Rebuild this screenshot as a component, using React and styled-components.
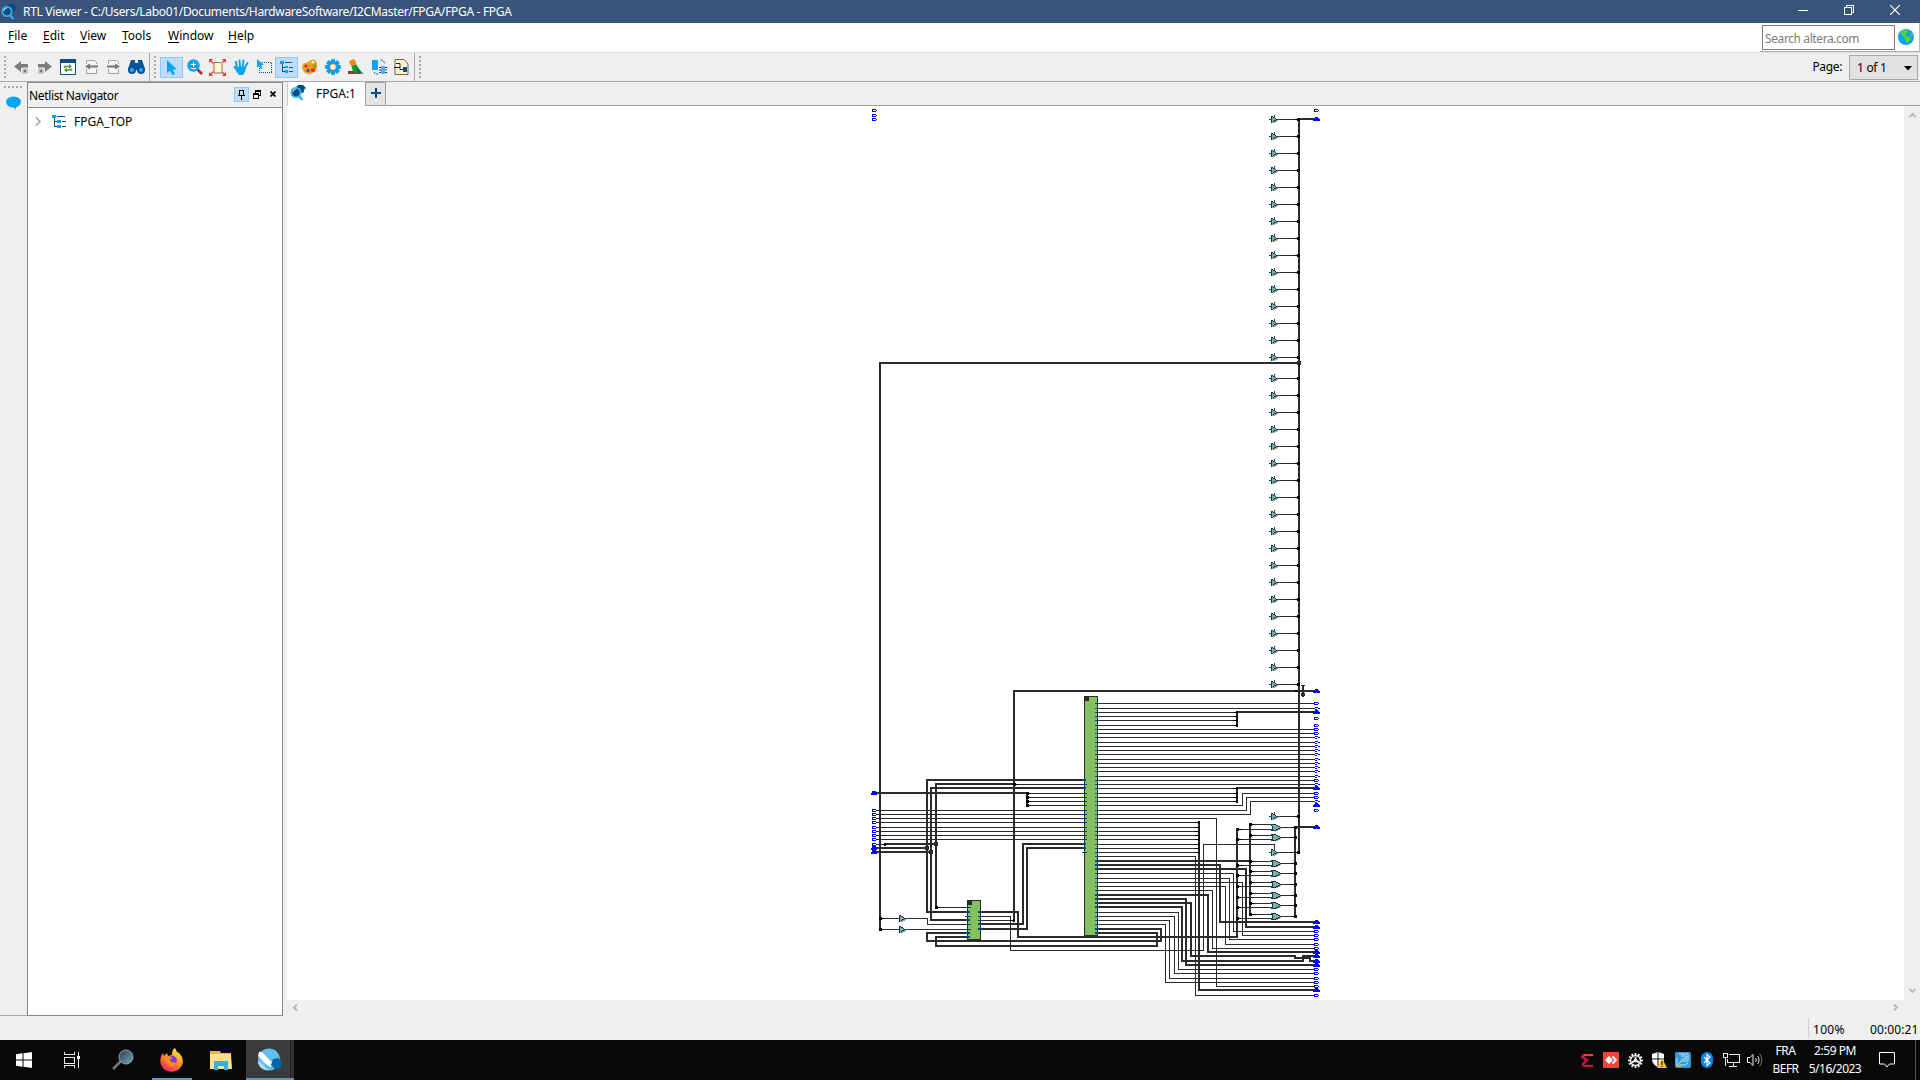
import React from "react";
import styled, { createGlobalStyle } from "styled-components";

const Global = createGlobalStyle`
  *{box-sizing:border-box}
  html,body{margin:0;padding:0;width:1920px;height:1080px;overflow:hidden;background:#efefef}
  body{font-family:"Noto Sans","Open Sans",sans-serif;font-size:12px;color:#000}
  svg{display:block;flex:none}
`;
const Screen = styled.div`width:1920px;height:1080px;display:flex;flex-direction:column;background:#efefef;`;
const Label = styled.span`
  display:block;white-space:pre;line-height:${(p) => p.$lh || 16}px;
  font-size:${(p) => p.$size || 12}px;letter-spacing:${(p) => p.$ls || 0}px;
  color:${(p) => p.$color || "#000"};
`;

const TitleBar = styled.header`height:23px;flex:none;display:flex;align-items:center;background:#38547b;padding-left:1px;`;
const TitleText = styled(Label)`margin-left:6px;padding-top:1px;`;
const WindowButtons = styled.div`margin-left:auto;display:flex;padding-right:2px;`;
const WindowButton = styled.div`width:46px;height:23px;display:flex;align-items:center;justify-content:center;padding-right:1px;padding-bottom:3px;`;

const MenuBar = styled.nav`height:29px;flex:none;display:flex;background:#fff;align-items:flex-start;padding-left:8px;`;
const MenuItem = styled(Label)`
  margin-top:5px;width:${(p) => p.$w}px;line-height:16px;
  &::first-letter{text-decoration:underline;text-underline-offset:2px;}
`;
const SearchArea = styled.div`margin-left:auto;width:160px;height:29px;display:flex;align-items:flex-start;gap:3px;border-bottom:1px solid #aaa;border-right:1px solid #bbb;padding:2px 0 0 2px;`;
const SearchBox = styled.div`width:133px;height:25px;border:1px solid #7a7a7a;display:flex;align-items:center;padding:3px 0 0 2px;background:#fff;`;
const GlobeSlot = styled.div`padding-top:4px;`;

const ToolBar = styled.div`height:30px;flex:none;display:flex;align-items:stretch;border-top:1px solid #e0e0e0;border-bottom:1px solid #aaa;background:#efefef;`;
const ToolGroup = styled.div`
  width:${(p) => p.$w}px;display:flex;align-items:center;padding:0 0 0 4px;
  border-right:${(p) => (p.$last ? "0" : "1px solid #aaa")};
`;
const Grip = styled.i`width:2px;height:22px;flex:none;margin-right:${(p) => p.$gap || 4}px;background:repeating-linear-gradient(#aaa 0 2px,transparent 2px 4px);`;
const Tool = styled.div`
  width:${(p) => p.$w || 23}px;height:21px;flex:none;display:flex;align-items:center;justify-content:center;
  ${(p) => p.$on && "background:#bfdcf4;border:1px solid #90c8f6;"}
`;
const PageControl = styled.div`margin-left:auto;display:flex;align-items:center;gap:7px;padding-right:2px;`;
const PageSelect = styled.div`width:69px;height:25px;border:1px solid #a9a9a9;background:#e1e1e1;display:flex;align-items:center;justify-content:space-between;padding:2px 5px 0 7px;`;

const Workspace = styled.main`height:934px;flex:none;display:flex;`;
const Rail = styled.aside`width:27px;display:flex;flex-direction:column;align-items:center;padding-top:4px;gap:8px;border-bottom:1px solid #aaa;`;
const RailGrip = styled.i`width:19px;height:2px;background:repeating-linear-gradient(90deg,#aaa 0 2px,transparent 2px 4px);`;
const Dock = styled.section`width:256px;height:934px;display:flex;flex-direction:column;border:1px solid #828790;background:#fff;`;
const DockHead = styled.div`height:25px;flex:none;background:#efefef;border-bottom:1px solid #828790;display:flex;align-items:center;padding:2px 0 0 1px;`;
const DockButtons = styled.div`margin-left:auto;display:flex;align-items:center;height:24px;padding:0 1px 4px 0;`;
const PinButton = styled.div`width:15px;height:15px;background:#bfdcf4;border:1px solid #90c8f6;display:flex;align-items:center;justify-content:center;`;
const DockGlyph = styled.div`width:16px;height:15px;display:flex;align-items:center;justify-content:center;`;
const TreeRow = styled.div`height:26px;display:flex;align-items:center;padding-left:6px;gap:10px;`;
const TreeLabel = styled(Label)`margin-left:-3px;padding-top:1px;`;

const Viewer = styled.section`width:1633px;margin-left:4px;display:flex;flex-direction:column;`;
const TabStrip = styled.div`height:24px;flex:none;display:flex;border-bottom:1px solid #a0a0a0;`;
const Tab = styled.div`width:78px;height:24px;background:#fff;display:flex;align-items:flex-start;gap:10px;padding:3px 0 0 2px;border-left:1px solid #ccc;`;
const AddTab = styled.div`width:21px;height:23px;border:1px solid #a0a0a0;border-bottom:0;background:#e4e4e4;display:flex;align-items:center;justify-content:center;padding-bottom:2px;`;
const CanvasRow = styled.div`height:894px;display:flex;flex:none;`;
const Canvas = styled.div`width:1617px;height:894px;background:#fff;`;
const VScroll = styled.div`width:16px;display:flex;flex-direction:column;justify-content:space-between;align-items:center;padding:6px 0 6px;`;
const HScroll = styled.div`height:15px;width:1617px;display:flex;justify-content:space-between;align-items:center;padding:0 5px;`;

const StatusBar = styled.footer`height:24px;flex:none;display:flex;justify-content:flex-end;align-items:center;`;
const StatusCell = styled.div`width:${(p) => p.$w}px;height:20px;display:flex;align-items:center;padding:4px 0 0 ${(p) => p.$pad}px;border-left:${(p) => (p.$line ? "1px solid #cfcfcf" : "0")};`;

const TaskBar = styled.footer`height:40px;flex:none;display:flex;background:#090909;`;
const TaskButton = styled.div`
  width:${(p) => p.$w || 48}px;height:40px;display:flex;align-items:center;justify-content:center;flex:none;
  background:${(p) => (p.$active ? "linear-gradient(90deg,#3b3b3b 0 44px,#202020 44px 45px,#333 45px)" : "transparent")};
  border-bottom:${(p) => (p.$run ? "2px solid #7390b8" : "0")};
  padding-top:${(p) => (p.$run ? 1 : 0)}px;
  padding-right:${(p) => (p.$active ? 2 : 0)}px;
  margin-right:${(p) => p.$mr || 0}px;
`;
const Tray = styled.div`margin-left:auto;display:flex;align-items:center;`;
const TrayIcon = styled.div`width:24px;height:40px;display:flex;align-items:center;justify-content:center;`;
const TrayText = styled.div`width:${(p) => p.$w}px;display:flex;flex-direction:column;align-items:center;padding-bottom:1px;`;
const Notify = styled.div`width:49px;height:40px;display:flex;align-items:center;justify-content:center;padding-right:7px;`;
const ShowDesktop = styled.div`width:5px;height:40px;border-left:1px solid #555;`;

/* ---------- icons ---------- */
const Inspector = ({ w = 16 }) => (
  <svg width={w} height={w} viewBox="0 0 16 16">
    <path d="M6 2 8.500 0H13l3 3-1.500 1-1 3.500-4 1z" fill="#064a80" />
    <circle cx="6" cy="7.500" r="4.600" fill="#0b4c82" stroke="#35b4ee" strokeWidth="1.800" />
    <path d="M3 7a3 3 0 0 1 3-3" stroke="#9ce0ff" fill="none" />
    <path d="m9 11 3.500 4" stroke="#35a8e4" strokeWidth="2.400" />
  </svg>
);
const Tree = ({ w = 15 }) => (
  <svg width={w} height={w} viewBox="0 0 15 15" shapeRendering="crispEdges">
    <path d="M2.500 3v9.500H6M2.500 7.500h3" stroke="#0b4c82" fill="none" />
    <path d="M0 1h4v3H0zM5 6h4v3H5zM5 11h4v3H5z" fill="#00a3f0" />
    <path d="M5 2.500h8M10 7.500h4M10 12.500h4" stroke="#0b4c82" />
  </svg>
);
const Arrow = ({ flip }) => (
  <svg width="15" height="15" viewBox="0 0 15 15"><g transform={flip ? "matrix(-1 0 0 1 15 0)" : undefined}>
    <path d="M0 6.500 7 1v3h7v4H7v4z" fill="#7d7d7d" /><path d="M8 8h6v6H8z" fill="#b5b5b5" stroke="#efefef" /><path d="M10 10h2v2h-2z" fill="#777" />
  </g></svg>
);
const Refresh = () => (
  <svg width="16" height="16" viewBox="0 0 16 16"><path d="M.5.5h15v15H.5z" fill="#fff" stroke="#0b4c82" /><path d="M0 0h16v4H0z" fill="#0b4c82" />
    <path d="M4.500 9V7.500h6M11.500 9.500V11h-6" stroke="#4a9a38" strokeWidth="1.500" fill="none" /><path d="m9 5 3 2.500L9 10zM7 8.500 4 11l3 2.500z" fill="#4a9a38" /></svg>
);
const PageArrow = ({ flip }) => (
  <svg width="15" height="15" viewBox="0 0 15 15"><path d="M2.500 4V.5h8l2 2V4M2.500 9v4.500h10V9" fill="#f6f6f6" stroke="#a0a0a0" />
    <g transform={flip ? "matrix(-1 0 0 1 15 0)" : undefined}><path d="m1 6.500 5-3v2h8v2H6v2z" fill="#777" /></g></svg>
);
const Binoculars = () => (
  <svg width="17" height="16" viewBox="0 0 17 16"><path d="M3 1h4v3h3V1h4l3 9v1H0v-1z" fill="#075596" /><circle cx="4" cy="11" r="4" fill="#075596" /><circle cx="13" cy="11" r="4" fill="#075596" /><circle cx="4" cy="11" r="2" fill="#29aaf4" /><circle cx="13" cy="11" r="2" fill="#29aaf4" /></svg>
);
const Pointer = ({ s = 15 }) => <svg width={s} height={s} viewBox="0 0 15 15"><path d="M3 0v13l3-2.600L8.500 15l2.500-1-2.400-4.500H13z" fill="#00a3f5" /></svg>;
const Zoomer = () => (
  <svg width="16" height="16" viewBox="0 0 16 16"><path d="m10 10 5 5" stroke="#a52a20" strokeWidth="2.500" /><circle cx="6.500" cy="6.500" r="6.200" fill="#08a4f2" /><path d="M4 5.500h5M6.500 3v5M4 9.500h5" stroke="#fff" /></svg>
);
const Fit = () => (
  <svg width="17" height="17" viewBox="0 0 17 17"><path d="M5 3.500h6l2 2V14H5z" fill="#fff5cf" stroke="#85765a" /><path d="m1 1 3.500 3.500M16 1l-3 3M1 16l3.500-3.500M16 16l-3-3" stroke="#e33" strokeWidth="1.200" /><path d="M0 0h4L0 4zM17 0v4l-4-4zM0 17v-4l4 4zM17 17h-4l4-4z" fill="#e33" /></svg>
);
const Hand = () => (
  <svg width="16" height="16" viewBox="0 0 16 16"><path d="m4 9-1-6M7 8 6.500 1.500M9.500 8l1-6.500M11.500 9l3-5M5 12 1.500 8" stroke="#0aa2ee" strokeWidth="2" strokeLinecap="round" /><path d="M3 8h10l-1 5-2 3H6l-3-4z" fill="#0aa2ee" /></svg>
);
const Marquee = () => (
  <svg width="16" height="16" viewBox="0 0 16 16"><path d="M5.500 3.500h10v10h-12V9" fill="none" stroke="#0b4c82" strokeDasharray="1 1" shapeRendering="crispEdges" /><path d="M1 0v9l2-2 2 3 1.500-1L5 6h3z" fill="#00a3f5" /></svg>
);
const Palette = () => (
  <svg width="16" height="16" viewBox="0 0 16 16"><path d="M13 1C9-1 7 4 3 4c-5 1-3 10 3 11 6 0 10-4 9-10 0-2-1-3-2-4z" fill="#f59b1c" /><circle cx="11" cy="3" r="1.600" fill="#efefef" /><circle cx="4" cy="7" r="1.600" fill="#e62e20" /><circle cx="6" cy="11.500" r="1.700" fill="#0a64c8" /><circle cx="11" cy="11" r="2" fill="#e62e20" /><circle cx="12.500" cy="7" r="1.400" fill="#4a3" /></svg>
);
const Gear = ({ color = "#089fe9", hole = "#fff", s = 16, ring = "#f4a02a" }) => (
  <svg width={s} height={s} viewBox="-8 -8 16 16">{[0, 45, 90, 135].map((a) => <path key={a} d="M-2-7.800h4v15.600h-4z" fill={color} transform={`rotate(${a})`} />)}<circle r="6" fill={color} /><circle r="3" fill={hole} stroke={ring} /></svg>
);
const Bird = () => (
  <svg width="16" height="16" viewBox="0 0 16 16"><path d="M0 12h5l9 3H0z" fill="#7a4432" /><path d="M3 5h5l6 9-9-1z" fill="#0a9b3a" /><path d="m8 9 8 6-6-1z" fill="#087033" /><path d="M1 3l2-2 3-1 2 3v3L3 7z" fill="#f28a1e" /></svg>
);
const Swap = () => (
  <svg width="16" height="16" viewBox="0 0 16 16"><path d="M1 1h6v10H1z" fill="#09a5f5" /><path d="M9.500 1c3 0 4 2 4 4M3 13c1 2 2 2 5 2" fill="none" stroke="#0b4c82" strokeDasharray="2 1" /><path d="M10 7h4v8h-4z" fill="#4ab5ed" /><path d="M8 8.500h2M14 8.500h2M8 11h2M14 11h2M8 13.500h2M14 13.500h2" stroke="#0b4c82" /></svg>
);
const Sheet = () => (
  <svg width="15" height="16" viewBox="0 0 15 16"><path d="M1 .5h9L14 5v10.500H1z" fill="#fff4cf" stroke="#74654c" /><path d="M2 4.500h4v2M6 6.500v4h7M0 8.500h6" fill="none" stroke="#222" /><path d="M9 8h4v5H9z" fill="#0b4c82" /></svg>
);
const Globe = () => (
  <svg width="16" height="16" viewBox="0 0 16 16"><circle cx="8" cy="8" r="8" fill="#08a5f2" /><path d="M4 1h5l1 2-3 3 1 1 4 1 1 2-3 4-2-1-1-4-4-4z" fill="#5fd02b" /><path d="m12 3 3 2v2h-2z" fill="#5fd02b" /></svg>
);
const Chevron = ({ r }) => <svg width="7" height="7" viewBox="0 0 7 7"><path d="M.5 5 3.500 2l3 3" fill="none" stroke="#b5b5b5" strokeWidth="1.800" transform={`rotate(${r} 3.500 3.500)`} /></svg>;

/* ---------- schematic ---------- */
const INK = "#2b2b2b";
const PORT = "#06487a";
const BLUE = "#0000ff";
const thinY = (y) => y + 0.5;

const thickWires = [
  "M880 930V363H1299", "M1299 118V853", "M1298 119H1316", "M1014 921V691H1316",
  "M1086 780H927V912H967", "M1014 784H936V908", "M1086 788H931V920H967", "M874 793H1027",
  "M885 844H936", "M874 848H927", "M874 852H931", "M1086 844H1023V924H980", "M1086 848H1027V929H980",
  "M980 912H1018V937H1237V829", "M967 933H927V941H1161V929H1097", "M967 937H936V946H1157V933H1097",
  "M1237 726V712H1316", "M1237 802V788H1316", "M1199 821V990H1316", "M1097 861H1250M1250 823V915",
  "M1097 865H1220V922H1316", "M1097 869H1246V927H1316", "M1097 895H1208V952H1316", "M1097 899H1186V965H1316",
  "M1097 903H1191V956H1295V958H1310V961H1316", "M1097 907H1182V961H1303V956H1316", "M1295 918V827H1316", "M1027 793V806",
];
const passY = [703, 708, 729, 733, 737, 742, 746, 750, 754, 759, 763, 767, 771, 776, 780, 784];
const thinWires = [
  ...passY.map((y) => `M1097 ${y + 0.5}H1314`),
  ...[712, 716, 720, 725, 788, 793, 797, 801].map((y) => `M1097 ${y + 0.5}H1236`),
  ...[822, 827, 831, 835, 839, 844, 848, 852].map((y) => `M1097 ${y + 0.5}H1199`),
  "M1097 805.5H1242.5V793.5H1314", "M1097 810.5H1246.5V797.5H1314", "M1097 814.5H1250.5V801.5H1314",
  "M1097 818.5H1216.5V986.5H1314", "M1097 856.5H1195.5V995.5H1314",
  "M1097 873.5H1233.5V931.5H1314", "M1097 878.5H1229.5V939.5H1314", "M1097 882.5H1242.5V935.5H1314",
  "M1097 886.5H1225.5V944.5H1314", "M1097 890.5H1212.5V948.5H1314", "M1097 912.5H1178.5V969.5H1314",
  "M1097 916.5H1174.5V973.5H1314", "M1097 920.5H1169.5V978.5H1314", "M1097 924.5H1165.5V982.5H1314",
  "M980 916.5H1010.5V950.5H1203.5V844.5H1274.5V849",
  "M1014 784.5H1086", ...[793, 797, 801, 805].map((y) => `M1027 ${y + 0.5}H1086`),
  ...[810, 814, 818, 822, 827, 831, 835, 839].map((y) => `M876 ${y + 0.5}H1086`),
  "M876 844.5H885", "M936 907.5H967", "M880 918.5H899M905 918.5H927.5V924.5H967", "M880 929.5H967", "M980 920.5H1014",
];
const topGates = Array.from({ length: 15 }, (_, i) => 119 + 17 * i);
const lowGates = Array.from({ length: 19 }, (_, i) => 378 + 17 * i);
const bufferGates = [...topGates, ...lowGates, 816, 852];
const orGates = [827, 837, 863, 873, 884, 895, 905, 916];
const upperInputs = [824, 835, 861, 871, 882, 893, 903, 914];
const lowerInputs = [829, 839, 865, 875, 886, 897, 907, 918];
const solidOut = [119, 691, 712, 788, 805, 827, 922, 927, 952, 956, 961, 965, 990];
const roundOut = [708, 737, 742, 746, 750, 754, 759, 763, 767, 771, 776, 784, 801];
const hollowOut = [110, 703, 718, 725, 729, 733, 780, 793, 797, 810, 931, 935, 939, 944, 948, 969, 973, 978, 982, 986, 995];
const rightPorts = [703, 708, 712, 716, 720, 725, 729, 733, 737, 742, 746, 750, 754, 759, 763, 767, 771, 776, 780, 784, 788, 793, 797, 801, 805, 810, 814, 818, 822, 827, 831, 835, 839, 844, 848, 852, 856, 873, 878, 882, 886, 890, 912, 916, 920, 924];
const rightBusPorts = [861, 865, 869, 895, 899, 903, 907, 929, 933];
const leftPorts = [784, 793, 797, 801, 805, 810, 814, 818, 822, 827, 831, 835, 839, 852];

const Triangle = ({ x, y }) => (
  <g transform={`translate(${x} ${y - 3})`}>
    <path d="M1 6h3v1H1zM3 5h3v1H3zM5 4h2v1H5z" fill="#999" />
    <path d="M0 0h2v1h2v1h1v1h1v1H5v1H3v1H1v1H0z" fill={INK} />
    <path d="M1 1h1v1h2v1h1v1H3v1H2v1H1z" fill="#73b0ae" />
  </g>
);
const Buffer = ({ y }) => (
  <g>
    <path d={`M1280 ${y + 0.5}H1299`} stroke={INK} />
    <Triangle x={1271} y={y} />
    <path d={`M1269 ${y + 0.5}h3M1277 ${y + 0.5}h3M1274.5 ${y - 4}v3`} stroke={PORT} />
    <path d={`M1295 ${y}h3v1h-3zM1297 ${y - 1}h3v3h-3z`} fill="#000" />
  </g>
);
const OrGate = ({ y, a, b }) => (
  <g>
    <path d={`M1250 ${a + 0.5}H1271M1237 ${b + 0.5}H1271M1281 ${y + 0.5}H1295`} stroke={INK} />
    <path d={`M1273 ${y + 3}h5v1h-5zM1277 ${y + 2}h3v1h-3zM1279 ${y + 1}h2v1h-2z`} fill="#999" />
    <path d={`M1271 ${y - 3}h5v1h2v1h2v1h1v1h-1v1h-2v1h-2v1h-5v-1h1v-4h-1z`} fill={INK} />
    <path d={`M1272 ${y - 2}h4v1h2v1h2v1h-2v1h-2v1h-4v-1h1v-3h-1z`} fill="#73b0ae" />
    <path d={`M1269 ${a + 0.5}h4M1269 ${b + 0.5}h4M1280 ${y + 0.5}h2`} stroke={PORT} />
    <path d={`M1249 ${a - 1}h3v1h3v1h-3v1h-3zM1236 ${b - 1}h3v1h3v1h-3v1h-3zM1292 ${y}h2v-1h3v3h-3v-1h-2z`} fill="#000" />
  </g>
);
const HollowPin = ({ x, y }) => <path d={`M${x} ${y - 1}h4v1h1v1h-1v1h-4zM${x + 1} ${y}v1h3v-1z`} fill={BLUE} fillRule="evenodd" />;
const RoundPin = ({ y }) => <path d={`M1315 ${y - 1}h3v1h1v1h-1v-1h-3v1h-1v-1h1zM1315 ${y + 1}h2v1h-2zM1318 ${y + 1}h2v-1h-1v1z`} fill={BLUE} />;
const SolidPin = ({ x, y }) => <path d={`M${x + 2} ${y - 2}h3v1h1v1h1v2h-7v-2h1v-1h1z`} fill={BLUE} />;

const Schematic = () => (
  <svg width="1617" height="894" viewBox="287 106 1617 894" shapeRendering="crispEdges">
    <path d={thinWires.join("")} fill="none" stroke={INK} />
    <path d={thickWires.join("")} fill="none" stroke={INK} strokeWidth="2" strokeLinejoin="miter" />
    <path d="M1084 696h14v240h-14zM967 900h14v40h-14z" fill={INK} />
    <path d="M1085 697h12v238h-12zM968 901h12v38h-12z" fill="#84c060" />
    <path d="M1085 697h4v4h-4zM968 901h4v4h-4z" fill={INK} />
    <path d={rightPorts.map((y) => `M1095 ${thinY(y)}h4`).join("") + leftPorts.map((y) => `M1082 ${thinY(y)}h5`).join("")} stroke={PORT} />
    <path d={rightBusPorts.map((y) => `M1095 ${y}h4`).join("") + [780, 788, 844, 848].map((y) => `M1082 ${y}h4`).join("")} stroke={PORT} strokeWidth="2" />
    <path d={[907, 916, 924, 929].map((y) => `M965 ${thinY(y)}h6`).join("") + [916, 920].map((y) => `M978 ${thinY(y)}h4`).join("")} stroke={PORT} />
    <path d={[912, 920, 933, 937].map((y) => `M965 ${y}h5`).join("") + [912, 924, 929].map((y) => `M978 ${y}h4`).join("")} stroke={PORT} strokeWidth="2" />
    {bufferGates.map((y) => <Buffer key={y} y={y} />)}
    {orGates.map((y, i) => <OrGate key={y} y={y} a={upperInputs[i]} b={lowerInputs[i]} />)}
    {[918, 929].map((y) => <g key={y}><Triangle x={899} y={y} /><path d={`M897 ${thinY(y)}h3M905 ${thinY(y)}h3`} stroke={PORT} /><path d={`M879 ${y - 1}h3v1h2v1h-2v1h-3z`} fill="#000" /></g>)}
    {[793, 797, 801, 805].map((y) => <path key={y} d={`M1026 ${y - 1}h3v1h2v1h-2v1h-3z`} />)}
    {[712, 716, 720, 725, 788, 793, 797, 801].map((y) => <path key={y} d={`M1233 ${y}h3v-1h2v3h-2v-1h-3z`} />)}
    {[822, 827, 831, 835, 839, 844, 848, 852].map((y) => <path key={y} d={`M1195 ${y}h3v-1h2v3h-2v-1h-3z`} />)}
    <path d="M1013 783h3v1h2v1h-2v1h-3zM935 906h3v1h2v1h-2v1h-3zM1011 920h2v-1h2v3h-2v-1h-2zM884 843h2v3h-2zM1295 690h3v2h-3z" />
    <path d="M1297 361h4v4h-4zM934 842h4v4h-4zM925 846h4v4h-4zM929 850h4v4h-4z" fill={INK} />
    <path d="M1301 685h4v1h-1v7h1v3h-1v1h-2v-1h-1v-3h1v-7h-1z" fill={INK} />
    {hollowOut.map((y) => <HollowPin key={y} x={1314} y={y} />)}
    {[110, 115, 119].map((y) => <HollowPin key={y} x={872} y={y} />)}
    {[810, 814, 818, 822, 827, 831, 835, 839, 844].map((y) => <path key={y} d={`M872 ${y - 1}h4v1h-3v1h3v1h-4z`} fill={BLUE} />)}
    {roundOut.map((y) => <RoundPin key={y} y={y} />)}
    {solidOut.map((y) => <SolidPin key={y} x={1313} y={y} />)}
    {[793, 848, 852].map((y) => <path key={y} d={`M872 ${y - 2}h4v2h1v2h-6v-2h1z`} fill={BLUE} />)}
  </svg>
);

/* ---------- taskbar drawings ---------- */
const WindowsLogo = () => <svg width="16" height="16" viewBox="0 0 16 16"><path d="M0 2.300 6.500 1.300V7.500H0zM7.500 1.200 16 0v7.500H7.500zM0 8.500h6.500v6.200L0 13.700zM7.500 8.500H16V16l-8.500-1.200z" fill="#fff" /></svg>;
const TaskView = () => <svg width="17" height="16" viewBox="0 0 17 16" shapeRendering="crispEdges"><path d="M.5 0v2.500h10V0M.5 5.500h10v6H.5zM.5 16v-2.500h10V16M14.500 0v16" fill="none" stroke="#eee" /><path d="M13 4h3v3h-3z" fill="#fff" /></svg>;
const Lens = () => <svg width="22" height="22" viewBox="0 0 22 22"><defs><linearGradient id="lens" x1="0" y1="0" x2="1" y2="1"><stop stopColor="#223b50" /><stop offset="1" stopColor="#7ea5bd" /></linearGradient></defs><path d="m1 20 8-8" stroke="#777" strokeWidth="2.500" /><circle cx="14" cy="8" r="7" fill="url(#lens)" stroke="#91a4af" /></svg>;
const Firefox = () => (
  <svg width="24" height="24" viewBox="0 0 24 24"><defs><linearGradient id="fox" x1=".8" y1="0" x2=".3" y2="1"><stop stopColor="#fff04a" /><stop offset=".45" stopColor="#ff9a22" /><stop offset="1" stopColor="#ff1f63" /></linearGradient></defs>
    <path d="M3 5l1 3 3-3 1 3 4-1c0-4 1-6 3-7l2 4 2 1c5 5 5 11 1 15-4 5-13 5-17 0C-1 15 0 9 3 5z" fill="url(#fox)" /><circle cx="12" cy="12.500" r="4.800" fill="#7b3bd8" /><path d="M4 9l5-1 4 2-3 1 1 3 6 1c-3 5-9 4-11 0z" fill="#ff8a1c" /></svg>
);
const Folder = () => <svg width="22" height="19" viewBox="0 0 22 19"><path d="M0 0h10l1 2h10v4H0z" fill="#f2b632" /><path d="M1 3h20l1 15H0V3z" fill="#fde28d" /><path d="M4 19v-9h14v9h-4v-4H8v4z" fill="#35b1e8" /></svg>;
const Quartus = () => <svg width="25" height="23" viewBox="0 0 25 23"><circle cx="12" cy="11.500" r="11" fill="#62bdec" /><path d="M2 4c4-2 8 7 13 10l-1 5C8 17 5 11 1 8z" fill="#fff" /><path d="M1 13c4 1 6 6 11 9-6 1-11-3-11-9z" fill="#a6dcf6" /><path d="m16 11 5-1 4 3-1 7-6 1-4-4z" fill="#0464a8" /></svg>;

const MENU = [["File", 35], ["Edit", 37], ["View", 42], ["Tools", 46], ["Window", 60], ["Help", 30]];

export default function App() {
  return (
    <Screen>
      <Global />
      <TitleBar>
        <Inspector w={16} />
        <TitleText $color="#fff" $ls={-0.32}>RTL Viewer - C:/Users/Labo01/Documents/HardwareSoftware/I2CMaster/FPGA/FPGA - FPGA</TitleText>
        <WindowButtons>
          <WindowButton><svg width="10" height="10"><path d="M0 5.500h10" stroke="#fff" /></svg></WindowButton>
          <WindowButton><svg width="10" height="10" shapeRendering="crispEdges"><path d="M.5 2.500h7v7h-7zM2.500 2V.5h7v7H8" stroke="#fff" fill="none" /></svg></WindowButton>
          <WindowButton><svg width="10" height="10"><path d="m0 0 10 10M10 0 0 10" stroke="#fff" strokeWidth="1.200" /></svg></WindowButton>
        </WindowButtons>
      </TitleBar>
      <MenuBar>
        {MENU.map(([t, w]) => <MenuItem key={t} $w={w}>{t}</MenuItem>)}
        <SearchArea><SearchBox><Label $color="#7c7c7c" $ls={-0.4}>Search altera.com</Label></SearchBox><GlobeSlot><Globe /></GlobeSlot></SearchArea>
      </MenuBar>
      <ToolBar>
        <ToolGroup $w={150}>
          <Grip $gap={4} />
          <Tool><Arrow /></Tool><Tool $w={22}><Arrow flip /></Tool><Tool $w={25}><Refresh /></Tool><Tool><PageArrow /></Tool><Tool $w={21}><PageArrow flip /></Tool><Tool $w={25}><Binoculars /></Tool>
        </ToolGroup>
        <ToolGroup $w={265}>
          <Grip $gap={4} />
          <Tool $on><Pointer /></Tool><Tool><Zoomer /></Tool><Tool><Fit /></Tool><Tool><Hand /></Tool><Tool><Marquee /></Tool><Tool $on><Tree w={14} /></Tool>
          <Tool><Palette /></Tool><Tool><Gear /></Tool><Tool><Bird /></Tool><Tool><Swap /></Tool><Tool><Sheet /></Tool>
        </ToolGroup>
        <ToolGroup $w={20} $last><Grip /></ToolGroup>
        <PageControl>
          <Label $ls={-0.35}>Page:</Label>
          <PageSelect><Label $ls={-0.3}>1 of 1</Label><svg width="8" height="5"><path d="M0 0h8L4 4.500z" /></svg></PageSelect>
        </PageControl>
      </ToolBar>
      <Workspace>
        <Rail>
          <RailGrip />
          <svg width="15" height="14" viewBox="0 0 15 14"><ellipse cx="7.500" cy="6" rx="7.500" ry="5.500" fill="#04a5f5" /><path d="m7 10 3 4v-4z" fill="#04a5f5" /></svg>
        </Rail>
        <Dock>
          <DockHead>
            <Label $ls={-0.35}>Netlist Navigator</Label>
            <DockButtons>
              <PinButton><svg width="7" height="11" shapeRendering="crispEdges"><path d="M1.500 6V1.500h4V6M0 6.500h7M3.500 7v4" stroke="#000" fill="none" /></svg></PinButton>
              <DockGlyph><svg width="8" height="9" shapeRendering="crispEdges"><path d="M.5 3.500h5v5h-5zM2.500 3V.5h5v5H6" stroke="#000" fill="none" /><path d="M0 3h6v2H0zM2 0h6v2H2z" /></svg></DockGlyph>
              <DockGlyph><svg width="6" height="6"><path d="m.5.5 5 5M5.500.5l-5 5" stroke="#000" strokeWidth="1.600" /></svg></DockGlyph>
            </DockButtons>
          </DockHead>
          <TreeRow>
            <svg width="8" height="9"><path d="m2 .5 4 4-4 4" fill="none" stroke="#a5a5a5" strokeWidth="1.600" /></svg>
            <Tree w={15} />
            <TreeLabel>FPGA_TOP</TreeLabel>
          </TreeRow>
        </Dock>
        <Viewer>
          <TabStrip>
            <Tab><Inspector w={16} /><Label $lh={18}>FPGA:1</Label></Tab>
            <AddTab><svg width="10" height="10"><path d="M0 5h10M5 0v10" stroke="#0b4c82" strokeWidth="2" /></svg></AddTab>
          </TabStrip>
          <CanvasRow>
            <Canvas><Schematic /></Canvas>
            <VScroll><Chevron r={0} /><Chevron r={180} /></VScroll>
          </CanvasRow>
          <HScroll><Chevron r={270} /><Chevron r={90} /></HScroll>
        </Viewer>
      </Workspace>
      <StatusBar>
        <StatusCell $w={61} $pad={4} $line><Label $ls={0.3}>100%</Label></StatusCell>
        <StatusCell $w={51} $pad={1}><Label $ls={0.1}>00:00:21</Label></StatusCell>
      </StatusBar>
      <TaskBar>
        <TaskButton><WindowsLogo /></TaskButton>
        <TaskButton><TaskView /></TaskButton>
        <TaskButton $w={54} $mr={2}><Lens /></TaskButton>
        <TaskButton $w={40} $mr={5} $run><Firefox /></TaskButton>
        <TaskButton $mr={1}><Folder /></TaskButton>
        <TaskButton $run $active><Quartus /></TaskButton>
        <Tray>
          <TrayIcon><svg width="13" height="13"><path d="M12 1H3L1 3l5 3-4 4 1 2h9" fill="none" stroke="#c41838" strokeWidth="2.500" /><path d="M3 1h9" stroke="#ed4a46" strokeWidth="2" strokeDasharray="4 1" /></svg></TrayIcon>
          <TrayIcon><svg width="16" height="16"><path d="M0 0h16v16H0z" fill="#ef443b" /><path d="m6 4 4 4-4 4-4-4z" fill="#fff" /><path d="m9.500 4.500 3.500 3.500-3.500 3.500" fill="none" stroke="#fff" strokeWidth="1.800" /></svg></TrayIcon>
          <TrayIcon><svg width="15" height="15" viewBox="-8 -8 16 16">{[0, 30, 60, 90, 120, 150].map((a) => <path key={a} d="M-1-8h2V8h-2z" fill="#eee" transform={`rotate(${a})`} />)}<circle r="6" fill="#eee" /><circle r="4.500" fill="#111" /><path d="M0-4v4l-4 2M0 0l4 2" stroke="#eee" strokeWidth="2" /><circle r="2" fill="#eee" /></svg></TrayIcon>
          <TrayIcon><svg width="16" height="16"><path d="M7 0 13 2v5c0 4-3 7-6 8-3-1-6-4-6-8V2z" fill="#fff" /><path d="M7 0v15M1 7h12" stroke="#111" /><path d="m11 6 5 10H6z" fill="#ffc61a" /><path d="M11 9v4M11 14v1" stroke="#222" strokeWidth="1.200" /></svg></TrayIcon>
          <TrayIcon><svg width="16" height="16"><rect width="16" height="16" rx="2" fill="#319bd2" /><path d="M4 2h9v7H6l-2 3M6 4h5v3H6M2 6v7h8l3-2" fill="none" stroke="#c1e7f6" /><path d="M1 13h5v2H1z" fill="#e2a14f" /></svg></TrayIcon>
          <TrayIcon><svg width="12" height="16"><rect width="12" height="16" rx="6" fill="#0a82ec" /><path d="m3 5 6 6-3 2.500v-11L9 5l-6 6" fill="none" stroke="#fff" strokeWidth="1.200" /></svg></TrayIcon>
          <TrayIcon><svg width="17" height="14" shapeRendering="crispEdges"><path d="M6 1.500h10.500v8H4.500V6M10.500 10v3M6 13.500h8M.5.500h4v4h-4zM2.500 5v8" fill="none" stroke="#eee" /></svg></TrayIcon>
          <TrayIcon><svg width="16" height="14"><path d="M.5 4.500H3l3-3v11l-3-3H.5zM8.500 5c1 1 1 3 0 4M10.500 3c2 2 2 6 0 8" fill="none" stroke="#eee" /><path d="M12.500 1c3 3 3 9 0 12" fill="none" stroke="#777" /></svg></TrayIcon>
          <TrayText $w={37}><Label $lh={18} $color="#fff" $ls={-0.4}>FRA</Label><Label $lh={18} $color="#fff" $ls={-0.5}>BEFR</Label></TrayText>
          <TrayText $w={62}><Label $lh={18} $color="#fff" $ls={-0.45}>2:59 PM</Label><Label $lh={18} $color="#fff" $ls={-0.5}>5/16/2023</Label></TrayText>
          <Notify><svg width="16" height="16"><path d="M.5.500h15v11.500h-5L8 15l-2.500-3h-5z" fill="none" stroke="#fff" /></svg></Notify>
          <ShowDesktop />
        </Tray>
      </TaskBar>
    </Screen>
  );
}
